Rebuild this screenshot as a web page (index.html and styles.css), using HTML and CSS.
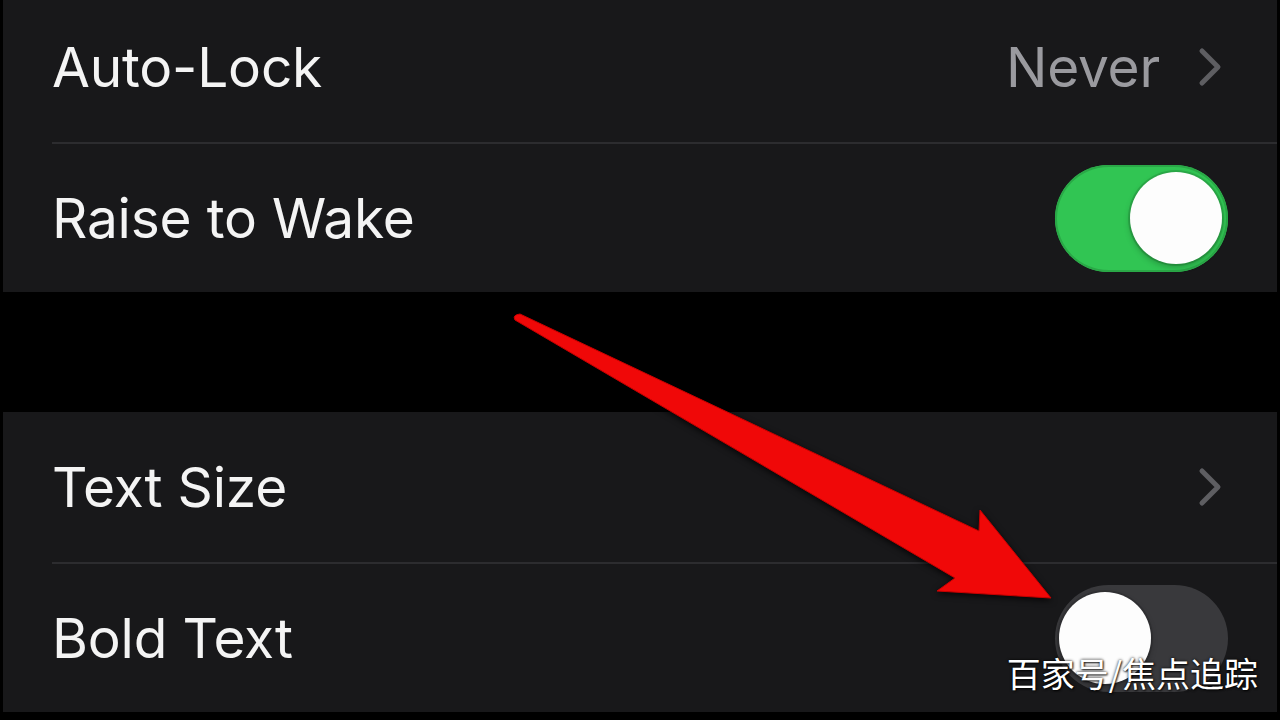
FILE: index.html
```html
<!DOCTYPE html>
<html>
<head>
    <title>Display &amp; Brightness</title>
    <link rel="stylesheet" href="styles.css">
</head>
<body>
    <div class="screen">
        <div class="group first">
            <div class="row">
                <span class="label">Auto-Lock</span>
                <span class="detail">
                    <span class="value">Never</span>
                    <svg class="chevron" viewBox="0 0 24 40"><path d="M4 4 L20 20 L4 36"/></svg>
                </span>
            </div>
            <div class="row">
                <span class="label">Raise to Wake</span>
                <span class="switch on"><span class="knob"></span></span>
            </div>
        </div>

        <div class="group">
            <div class="row">
                <span class="label">Text Size</span>
                <span class="detail">
                    <svg class="chevron" viewBox="0 0 24 40"><path d="M4 4 L20 20 L4 36"/></svg>
                </span>
            </div>
            <div class="row">
                <span class="label">Bold Text</span>
                <span class="switch off"><span class="knob"></span></span>
            </div>
        </div>

        <!-- annotation arrow drawn over the screenshot -->
        <svg class="arrow" viewBox="0 0 1280 720">
            <path d="M520 322 Q512 323 515 328 L955 586 L937 599 L1051 606 L980 518 L979 539 Z"/>
        </svg>

        <div class="watermark">百家号/焦点追踪</div>
    </div>
</body>
</html>
```

FILE: styles.css
```css
* {
    margin: 0;
    padding: 0;
    box-sizing: border-box;
}

body {
    background: #000;
    font-family: Inter, "Noto Sans", sans-serif;
    color: #f4f4f4;
    width: 1280px;
    height: 720px;
    overflow: hidden;
}

.screen {
    position: relative;
    height: 720px;
}

.group {
    margin: 120px 3px 0;
    background: #18181a;
}

.group.first {
    margin-top: -8px;
}

.row {
    height: 150px;
    margin-left: 49px;
    padding-right: 49px;
    display: flex;
    align-items: center;
    justify-content: space-between;
}

.row + .row {
    border-top: 2px solid #2c2c2f;
}

.label {
    font-size: 55px;
    letter-spacing: -0.2px;
}

.detail {
    display: flex;
    align-items: center;
    gap: 38px;
}

.value {
    font-size: 55px;
    color: #9a9a9f;
    letter-spacing: -0.2px;
}

.chevron {
    width: 24px;
    height: 40px;
    margin-right: 6px;
    fill: none;
    stroke: #5e5e62;
    stroke-width: 5;
    stroke-linecap: round;
    stroke-linejoin: round;
}

.switch {
    width: 173px;
    height: 107px;
    border-radius: 54px;
    display: flex;
    align-items: center;
    padding: 0 6px;
}

.switch.on {
    background: #31c553;
    justify-content: flex-end;
    box-shadow: inset 0 0 0 2px #2aa847;
}

.switch.off {
    background: #39393c;
    justify-content: flex-start;
    padding: 0 4px;
}

.knob {
    width: 92px;
    height: 92px;
    border-radius: 50%;
    background: #fdfdfd;
    box-shadow: 0 0 0 2px rgba(0, 0, 0, 0.12), 0 3px 6px rgba(0, 0, 0, 0.25);
}

.arrow {
    position: absolute;
    top: 0;
    left: 0;
    width: 1280px;
    height: 720px;
    pointer-events: none;
}

.arrow path {
    fill: #f00808;
    stroke: #c80000;
    stroke-width: 1;
    stroke-linejoin: round;
    filter: drop-shadow(0 2px 3px rgba(0, 0, 0, 0.8));
}

.watermark {
    position: absolute;
    right: 22px;
    top: 662px;
    font-family: "Noto Sans CJK SC", sans-serif;
    font-size: 34px;
    line-height: 1.1;
    color: #fff;
    text-shadow: 0 0 3px rgba(0, 0, 0, 0.9), 1px 1px 2px rgba(0, 0, 0, 0.8);
}
```
